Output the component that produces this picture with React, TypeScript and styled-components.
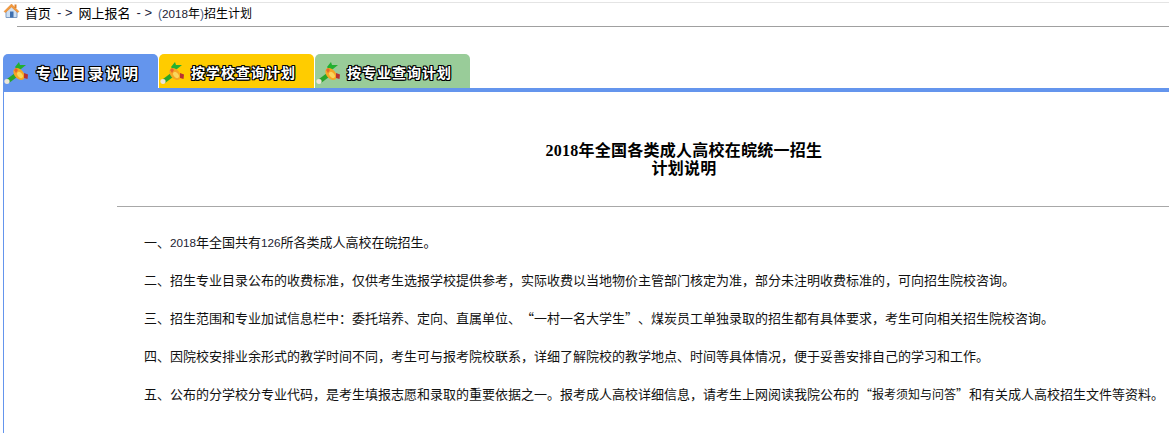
import React from "react";
import styled, { createGlobalStyle } from "styled-components";

const Global = createGlobalStyle`
  html, body { margin: 0; padding: 0; background: #fff; overflow: hidden; }
  body { font-family: "Noto Sans CJK SC", "Liberation Sans", sans-serif; color: #000; }
`;

const Page = styled.div`
  width: 1169px;
  height: 431px;
  margin-top: 2px;
  overflow: hidden;
  border-top: 1px solid #e4e4e4;
  box-sizing: border-box;
`;

const Crumbs = styled.div`
  display: flex;
  align-items: flex-start;
  padding-left: 3px;
  height: 25px;
`;

const CrumbBody = styled.div`
  flex: 1;
  margin-left: -4px;
  height: 24px;
  padding-left: 8px;
  box-sizing: border-box;
  border-bottom: 1px solid #a0a0a0;
  font-size: 13px;
  line-height: 20px;
  white-space: pre;
  display: flex;
  align-items: flex-start;
`;

const Arrow = styled.span`
  width: 27.5px;
  padding-left: 6px;
  box-sizing: border-box;
  color: #1a1a3a;
  font-family: "Liberation Sans", sans-serif;
`;

const Small = styled.span`
  font-size: 12px;
`;

const Paren = styled.span`
  font-family: "Liberation Sans", sans-serif;
  color: #46608a;
`;

const Num = styled.span`
  font-family: "Liberation Sans", sans-serif;
  font-size: 11.7px;
  color: #223;
`;

const TabBar = styled.div`
  display: flex;
  margin: 26px 0 0 3px;
  height: 34px;
  gap: 1px;
`;

const Tab = styled.div<{ $bg: string; $size: number; $gap: number }>`
  width: 155px;
  background: ${(p) => p.$bg};
  border-radius: 5px 5px 0 0;
  display: flex;
  align-items: center;
  box-sizing: border-box;
  padding-left: 1px;
  gap: ${(p) => p.$gap}px;
  font-size: ${(p) => p.$size}px;
  font-weight: 700;
  color: #fff;
  white-space: nowrap;
  text-shadow: 1px 0 0 #000, -1px 0 0 #000, 0 1px 0 #000, 0 -1px 0 #000, 1px 1px 0 #000, -1px -1px 0 #000, 1px -1px 0 #000, -1px 1px 0 #000;
`;

const TabLabel = styled.span<{ $sp: number }>`
  letter-spacing: ${(p) => p.$sp}px;
  padding-top: 2px;
`;

const Panel = styled.div`
  margin-left: 3px;
  border-top: 4px solid #6495ed;
  border-left: 1px solid #6495ed;
  height: 345px;
  width: 1250px;
  padding-left: 113px;
  box-sizing: border-box;
`;

const Title = styled.h1`
  margin: 0;
  padding-top: 50px;
  height: 115px;
  width: 1134px;
  box-sizing: border-box;
  border-bottom: 1px solid #a8a8a8;
  text-align: center;
  font-size: 16px;
  line-height: 18px;
  letter-spacing: 0.25px;
  font-weight: 700;
  font-family: "Liberation Serif", "Noto Sans CJK SC", serif;
`;

const Notes = styled.div`
  padding: 15.5px 0 0 27px;
  display: flex;
  flex-direction: column;
`;

const Note = styled.p`
  margin: 0;
  font-size: 13px;
  line-height: 37.75px;
  white-space: nowrap;
  color: #111;
`;

const Quote = styled.span`
  padding: 0 6.5px;
`;

const QuotedDoc = styled.span`
  font-size: 12px;
  padding: 0 1px;
`;

const HomeIcon = () => (
  <svg width="18" height="18" viewBox="0 0 18 18" style={{ marginTop: -1, flexShrink: 0 }}>
    <path d="M3 9 V15.5 H14 V9 L8.5 4 Z" fill="#cfe0f3" stroke="#7f9dc4" strokeWidth="1" />
    <rect x="7" y="9.5" width="3.5" height="6" fill="#3f6fae" />
    <path d="M1 9.5 L8.5 2 L16 9.5 L14.5 10.5 L8.5 5 L2.5 10.5 Z" fill="#f39a3c" stroke="#e0812a" strokeWidth="0.5" />
    <rect x="11.5" y="2.5" width="2" height="3.5" fill="#e0812a" />
  </svg>
);

const Horn = () => (
  <svg width="25" height="30" viewBox="0 0 25 30" style={{ flexShrink: 0 }}>
    <path d="M3 23 L11 17 L13 21 L5 27 Z" fill="#2aa52a" />
    <ellipse cx="3" cy="25.5" rx="2.6" ry="2.4" fill="#eee6d8" />
    <path d="M11 11 L15 6 L16 9 L22 9 L17 13 L14 15 Z" fill="#22b030" />
    <ellipse cx="15" cy="18" rx="7" ry="4.5" fill="#f6a623" transform="rotate(50 15 18)" />
    <ellipse cx="16" cy="19" rx="3.6" ry="2.2" fill="#f9d65c" transform="rotate(50 16 19)" />
    <path d="M10 14 L12 12 L14 14 L12 17 Z" fill="#e8672a" />
    <path d="M20 17 L24 18.5 L23.5 23 L20 22 Z" fill="#b83232" />
  </svg>
);

export default function App() {
  return (
    <Page lang="zh-CN">
      <Global />
      <Crumbs>
        <HomeIcon />
        <CrumbBody>
          <span>首页</span>
          <Arrow>- &gt;</Arrow>
          <span>网上报名</span>
          <Arrow>- &gt;</Arrow>
          <Small>
            <Paren>(</Paren>
            <Num>2018</Num>年<Paren>)</Paren>招生计划
          </Small>
        </CrumbBody>
      </Crumbs>
      <TabBar>
        <Tab $bg="#6495ed" $size={15} $gap={7}>
          <Horn />
          <TabLabel $sp={2.4}>专业目录说明</TabLabel>
        </Tab>
        <Tab $bg="#ffcc00" $size={14} $gap={6}>
          <Horn />
          <TabLabel $sp={1}>按学校查询计划</TabLabel>
        </Tab>
        <Tab $bg="#99cc99" $size={14} $gap={6}>
          <Horn />
          <TabLabel $sp={1}>按专业查询计划</TabLabel>
        </Tab>
      </TabBar>
      <Panel>
        <Title>
          2018年全国各类成人高校在皖统一招生
          <br />
          计划说明
        </Title>
        <Notes>
          <Note>一、<Num>2018</Num>年全国共有<Num>126</Num>所各类成人高校在皖招生。</Note>
          <Note>二、招生专业目录公布的收费标准，仅供考生选报学校提供参考，实际收费以当地物价主管部门核定为准，部分未注明收费标准的，可向招生院校咨询。</Note>
          <Note>三、招生范围和专业加试信息栏中：委托培养、定向、直属单位、<Quote>“一村一名大学生”</Quote>、煤炭员工单独录取的招生都有具体要求，考生可向相关招生院校咨询。</Note>
          <Note>四、因院校安排业余形式的教学时间不同，考生可与报考院校联系，详细了解院校的教学地点、时间等具体情况，便于妥善安排自己的学习和工作。</Note>
          <Note>五、公布的分学校分专业代码，是考生填报志愿和录取的重要依据之一。报考成人高校详细信息，请考生上网阅读我院公布的<QuotedDoc>“报考须知与问答”</QuotedDoc>和有关成人高校招生文件等资料。</Note>
        </Notes>
      </Panel>
    </Page>
  );
}
